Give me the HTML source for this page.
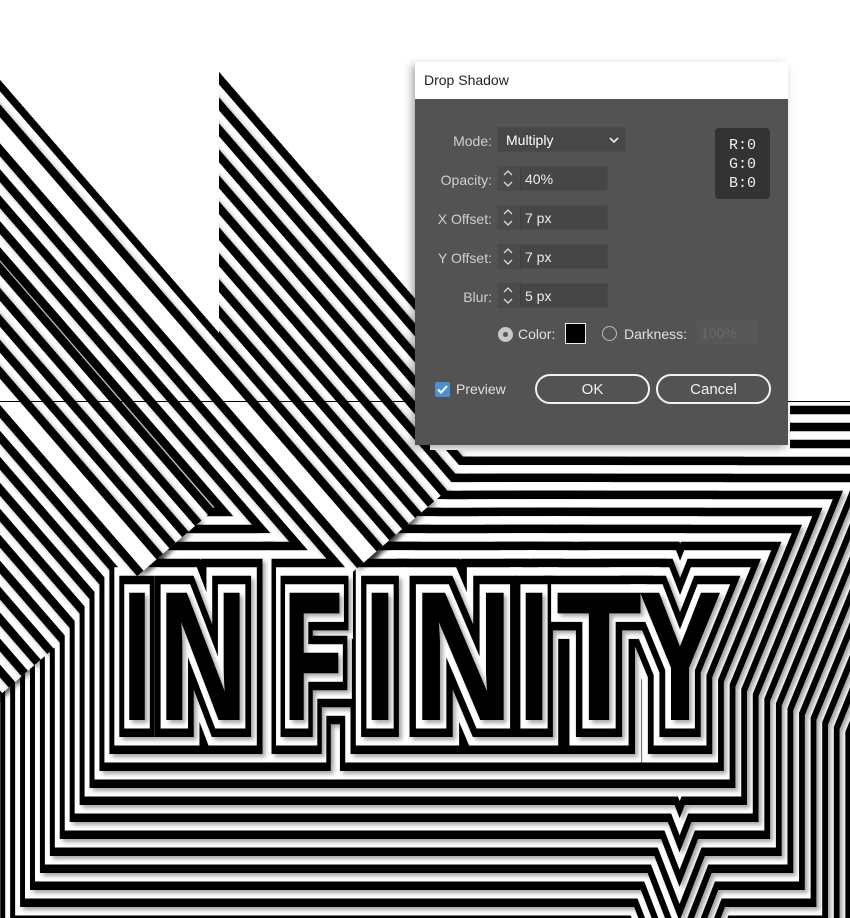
<!DOCTYPE html>
<html><head><meta charset="utf-8">
<style>
html,body{margin:0;padding:0;width:850px;height:918px;overflow:hidden;background:#fff;font-family:"Liberation Sans",sans-serif;}
#art{position:absolute;left:0;top:0;}
.dlg{position:absolute;left:415px;top:62px;width:373px;height:383px;box-shadow:-3px 3px 8px rgba(0,0,0,.35);}
.tb{position:absolute;left:0;top:0;width:373px;height:37px;background:#fff;}
.tb span{position:absolute;left:9px;top:10px;font-size:14px;color:#222;}
.body{position:absolute;left:0;top:37px;width:373px;height:346px;background:#535353;}
.lbl{position:absolute;font-size:14px;color:#cfcfcf;text-align:right;width:80px;}
.fld{position:absolute;background:#464646;border:1px solid #4c4c4c;box-sizing:border-box;}
.spin{position:absolute;left:0;top:0;width:22px;height:100%;background:#4b4b4b;border-right:1px solid #3e3e3e;}
.val{position:absolute;left:27px;top:4px;font-size:14px;color:#eee;}
.btn{position:absolute;height:30px;border:2px solid #f2f2f2;border-radius:16px;box-sizing:border-box;color:#f0f0f0;font-size:15px;text-align:center;line-height:27px;}
</style></head><body>
<svg id="art" width="850" height="918" viewBox="0 0 850 918">
<defs>
<clipPath id="cp"><polygon points="0,80 219,333 219,72 430,316 430,450 790,450 790,401 850,401 850,918 0,918"/></clipPath>
<filter id="ds" filterUnits="userSpaceOnUse" x="-50" y="-50" width="950" height="1020"><feDropShadow dx="3" dy="3" stdDeviation="2" flood-color="#000" flood-opacity="0.35"/></filter>
<g id="sk" font-family="Liberation Sans, sans-serif" font-weight="bold" font-size="185">
<text x="122" y="720" textLength="30" lengthAdjust="spacingAndGlyphs">I</text>
<text x="158" y="720" textLength="90" lengthAdjust="spacingAndGlyphs">N</text>
<text x="283" y="720" textLength="60" lengthAdjust="spacingAndGlyphs">F</text>
<text x="364" y="720" textLength="32" lengthAdjust="spacingAndGlyphs">I</text>
<text x="413" y="720" textLength="100" lengthAdjust="spacingAndGlyphs">N</text>
<text x="518" y="720" textLength="32" lengthAdjust="spacingAndGlyphs">I</text>
<text x="556" y="720" textLength="86" lengthAdjust="spacingAndGlyphs">T</text>
<text x="638" y="720" textLength="84" lengthAdjust="spacingAndGlyphs">Y</text>
<path d="M -400,-70 L 150,565 M -100,15 L 370,557" fill="none"/>
</g>
</defs>
<g clip-path="url(#cp)" id="layers"></g>
<line x1="0" y1="401.5" x2="850" y2="401.5" stroke="#000" stroke-width="1"/>
</svg>
<script>
(function(){var NS="http://www.w3.org/2000/svg";var g=document.getElementById('layers');
for(var i=70;i>=0;i--){var e=document.createElementNS(NS,'g');var c=(i%2)?'#fff':'#000';
e.setAttribute('fill',c);e.setAttribute('stroke',c);e.setAttribute('stroke-width',i*17);
e.setAttribute('stroke-linejoin','miter');e.setAttribute('stroke-miterlimit','4');
if(i<40)e.setAttribute('filter','url(#ds)');
if(i==0)e.setAttribute('stroke','none');
var u=document.createElementNS(NS,'use');u.setAttribute('href','#sk');e.appendChild(u);g.appendChild(e);}
})();
</script>
<div class="dlg">
<div class="tb"><span>Drop Shadow</span></div>
<div class="body">
<div class="lbl" style="left:-3px;top:34px;">Mode:</div>
<div class="fld" style="left:82px;top:28px;width:129px;height:25px;background:#474747;"><div class="val" style="left:8px;top:4px;color:#fff;">Multiply</div>
<svg style="position:absolute;left:111px;top:8px" width="10" height="8"><path d="M1 2 L5 6 L9 2" fill="none" stroke="#eee" stroke-width="1.6"/></svg></div>
<div class="lbl" style="left:-3px;top:73px;">Opacity:</div>
<div class="fld" style="left:82px;top:67px;width:111px;height:25px;"><div class="spin"></div><div class="val">40%</div></div>
<div class="lbl" style="left:-3px;top:112px;">X Offset:</div>
<div class="fld" style="left:82px;top:106px;width:111px;height:25px;"><div class="spin"></div><div class="val">7 px</div></div>
<div class="lbl" style="left:-3px;top:151px;">Y Offset:</div>
<div class="fld" style="left:82px;top:145px;width:111px;height:25px;"><div class="spin"></div><div class="val">7 px</div></div>
<div class="lbl" style="left:-3px;top:190px;">Blur:</div>
<div class="fld" style="left:82px;top:184px;width:111px;height:25px;"><div class="spin"></div><div class="val">5 px</div></div>
<svg style="position:absolute;left:82px;top:67px" width="22" height="145">
<g fill="none" stroke="#ddd" stroke-width="1.3">
<path d="M7 9 L11 5 L15 9 M7 16 L11 20 L15 16"/>
<path d="M7 48 L11 44 L15 48 M7 55 L11 59 L15 55"/>
<path d="M7 87 L11 83 L15 87 M7 94 L11 98 L15 94"/>
<path d="M7 126 L11 122 L15 126 M7 133 L11 137 L15 133"/></g></svg>
<div style="position:absolute;left:300px;top:29px;width:55px;height:71px;background:#333;border-radius:4px;font-family:'Liberation Mono',monospace;font-size:15px;color:#eee;line-height:19px;padding-top:8px;box-sizing:border-box;text-align:center;">R:0<br>G:0<br>B:0</div>
<div style="position:absolute;left:83px;top:228px;width:15px;height:15px;border-radius:50%;background:#c8c8c8;"><div style="position:absolute;left:5px;top:5px;width:5px;height:5px;border-radius:50%;background:#555;"></div></div>
<div style="position:absolute;left:103px;top:227px;font-size:14px;color:#e0e0e0;">Color:</div>
<div style="position:absolute;left:150px;top:224px;width:21px;height:21px;background:#000;border:1px solid #eee;box-sizing:border-box;"></div>
<div style="position:absolute;left:187px;top:227px;width:15px;height:15px;border-radius:50%;border:1.5px solid #bbb;box-sizing:border-box;"></div>
<div style="position:absolute;left:209px;top:227px;font-size:14px;color:#e0e0e0;">Darkness:</div>
<div style="position:absolute;left:281px;top:221px;width:63px;height:25px;background:#575757;font-size:14px;color:#6a6a6a;padding:5px 0 0 5px;box-sizing:border-box;">100%</div>
<div style="position:absolute;left:20px;top:283px;width:15px;height:15px;background:#4a90d9;border-radius:2px;"><svg width="15" height="15"><path d="M3 7.5 L6 10.5 L12 4" fill="none" stroke="#fff" stroke-width="2"/></svg></div>
<div style="position:absolute;left:41px;top:282px;font-size:14px;color:#e0e0e0;">Preview</div>
<div class="btn" style="left:120px;top:275px;width:115px;">OK</div>
<div class="btn" style="left:241px;top:275px;width:115px;">Cancel</div>
</div></div>
</body></html>
